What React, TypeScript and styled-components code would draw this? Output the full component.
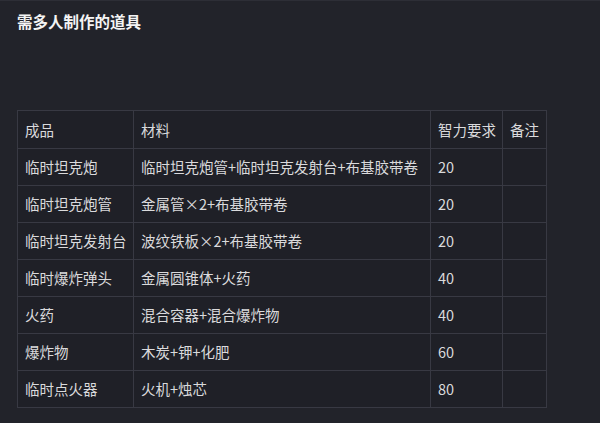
import React from "react";
import styled, { createGlobalStyle } from "styled-components";

const GlobalStyle = createGlobalStyle`
  html, body { margin: 0; padding: 0; background: #22232a; }
  body { font-family: "Noto Sans CJK SC", "Noto Sans", sans-serif; }
`;

const Page = styled.div`
  width: 600px;
  height: 423px;
  box-sizing: border-box;
  padding: 9px 17px 0;
  background: #22232a;
  border-top: 1px solid #2d2e36;
  overflow: hidden;
`;

const Title = styled.h3`
  margin: 0;
  font-size: 15.5px;
  line-height: 22px;
  font-weight: 700;
  color: #f4f4f4;
`;

const Table = styled.table`
  margin-top: 78px;
  border-collapse: collapse;
  color: #dadadc;
  font-size: 14.5px;
  table-layout: fixed;
`;

const Cell = styled.td<{ $w?: number; $head?: boolean }>`
  border: 1px solid #383943;
  padding: 0 6px 0 7px;
  height: ${(p) => (p.$head ? 37 : 36)}px;
  width: ${(p) => (p.$w ? `${p.$w - 14}px` : "auto")};
  line-height: 18px;
  text-align: left;
  font-weight: 400;
  white-space: nowrap;
  vertical-align: middle;
  background: #1f2027;
`;

const rows: [string, string, string][] = [
  ["临时坦克炮", "临时坦克炮管+临时坦克发射台+布基胶带卷", "20"],
  ["临时坦克炮管", "金属管×2+布基胶带卷", "20"],
  ["临时坦克发射台", "波纹铁板×2+布基胶带卷", "20"],
  ["临时爆炸弹头", "金属圆锥体+火药", "40"],
  ["火药", "混合容器+混合爆炸物", "40"],
  ["爆炸物", "木炭+钾+化肥", "60"],
  ["临时点火器", "火机+烛芯", "80"],
];

export default function App() {
  return (
    <>
      <GlobalStyle />
      <Page>
        <Title>需多人制作的道具</Title>
        <Table>
          <thead>
            <tr>
              <Cell as="th" $head $w={116}>成品</Cell>
              <Cell as="th" $head $w={297}>材料</Cell>
              <Cell as="th" $head $w={72}>智力要求</Cell>
              <Cell as="th" $head $w={44}>备注</Cell>
            </tr>
          </thead>
          <tbody>
            {rows.map((r) => (
              <tr key={r[0]}>
                <Cell>{r[0]}</Cell>
                <Cell>{r[1]}</Cell>
                <Cell>{r[2]}</Cell>
                <Cell></Cell>
              </tr>
            ))}
          </tbody>
        </Table>
      </Page>
    </>
  );
}
